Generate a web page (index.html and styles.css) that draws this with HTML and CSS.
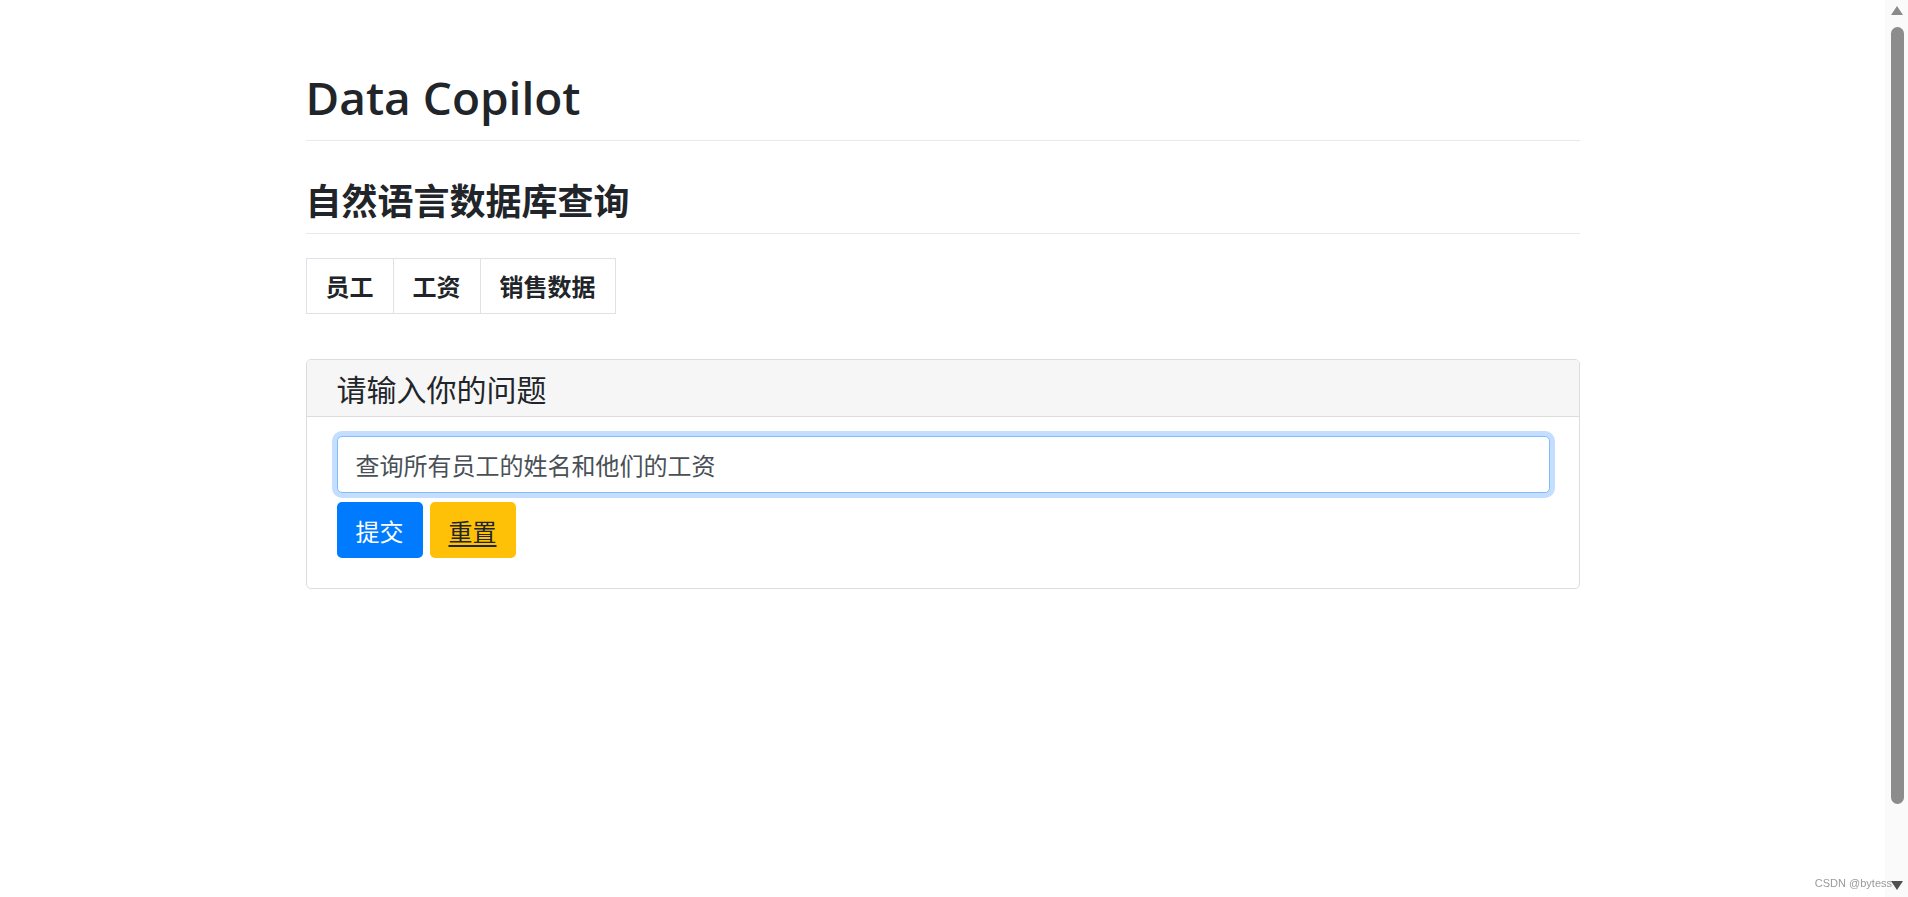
FILE: index.html
```html
<!DOCTYPE html>
<html>
<head>
    <meta charset="utf-8">
    <title>Data Copilot</title>
    <link rel="stylesheet" href="styles.css">
</head>
<body>
<div class="page">
    <div class="main">
        <div class="container">
            <h1 class="title">Data Copilot</h1>
            <h3 class="subtitle">自然语言数据库查询</h3>
            <table class="tables">
                <tr>
                    <th>员工</th>
                    <th>工资</th>
                    <th>销售数据</th>
                </tr>
            </table>
            <div class="card">
                <div class="card-header">
                    <h4>请输入你的问题</h4>
                </div>
                <div class="card-body">
                    <input class="question" type="text" value="查询所有员工的姓名和他们的工资">
                    <div class="actions">
                        <button class="btn btn-primary">提交</button>
                        <button class="btn btn-warning">重置</button>
                    </div>
                </div>
            </div>
        </div>
    </div>
    <div class="scrollbar">
        <div class="arrow up"></div>
        <div class="thumb"></div>
        <div class="arrow down"></div>
    </div>
</div>
<div class="watermark">CSDN @bytess</div>
</body>
</html>
```

FILE: styles.css
```css
html, body{
    margin: 0;
    height: 100%;
}
body{
    font-family: "Open Sans", "Noto Sans CJK SC", sans-serif;
    color: #212529;
    background: #fff;
    overflow: hidden;
}
.page{
    display: flex;
    height: 897px;
}
.main{
    flex: 1;
}
.container{
    width: 1274px;
    margin: 0 auto;
}
.title{
    font-size: 46px;
    font-weight: 600;
    line-height: 55px;
    margin: 0;
    padding-top: 70px;
    padding-bottom: 15px;
    border-bottom: 1px solid #e9e9e9;
}
.subtitle{
    font-family: "Noto Sans CJK SC", sans-serif;
    font-size: 36px;
    font-weight: 700;
    line-height: 42px;
    margin: 37px 0 0;
    padding-bottom: 13px;
    border-bottom: 1px solid #e9e9e9;
}
.tables{
    border-collapse: collapse;
    margin-top: 24px;
}
.tables th{
    font-family: "Noto Sans CJK SC", sans-serif;
    font-size: 24px;
    font-weight: 700;
    line-height: 30px;
    padding: 12px 19px;
    border: 1px solid #dee2e6;
}
.card{
    margin-top: 45px;
    border: 1px solid #dcdcdc;
    border-radius: 5px;
    overflow: hidden;
}
.card-header{
    background: #f6f6f6;
    border-bottom: 1px solid #dcdcdc;
    padding: 10px 30px;
}
.card-header h4{
    font-family: "Noto Sans CJK SC", sans-serif;
    font-size: 30px;
    font-weight: 400;
    line-height: 36px;
    margin: 0;
}
.card-body{
    padding: 19px 30px 30px;
}
.question{
    display: block;
    box-sizing: border-box;
    width: 1213px;
    height: 57px;
    padding: 0 18px;
    font-family: "Noto Sans CJK SC", sans-serif;
    font-size: 24px;
    color: #495057;
    border: 1px solid #80bdff;
    border-radius: 5px;
    box-shadow: 0 0 0 5px #c3defe;
    outline: none;
}
.actions{
    display: flex;
    gap: 7px;
    margin-top: 9px;
}
.btn{
    width: 86px;
    height: 56px;
    border: none;
    border-radius: 5px;
    font-family: "Noto Sans CJK SC", sans-serif;
    font-size: 24px;
    padding: 0;
}
.btn-primary{
    background: #007bff;
    color: #fff;
}
.btn-warning{
    background: #ffc107;
    color: #212529;
    text-decoration: underline;
    text-underline-offset: 4px;
}
.scrollbar{
    width: 23px;
    background: #fafafa;
    display: flex;
    flex-direction: column;
    align-items: center;
    padding-left: 1px;
    box-sizing: border-box;
}
.arrow{
    width: 0;
    height: 0;
    border-left: 6px solid transparent;
    border-right: 6px solid transparent;
}
.arrow.up{
    margin-top: 6px;
    border-bottom: 9px solid #8a8a8a;
}
.arrow.down{
    margin-top: 77px;
    border-top: 9px solid #505050;
}
.thumb{
    width: 13px;
    height: 777px;
    margin-top: 12px;
    background: #8c8c8c;
    border-radius: 7px;
}
.watermark{
    position: fixed;
    right: 16px;
    bottom: 8px;
    font-family: "Liberation Sans", sans-serif;
    font-size: 11px;
    color: #9a9a9a;
}
```
